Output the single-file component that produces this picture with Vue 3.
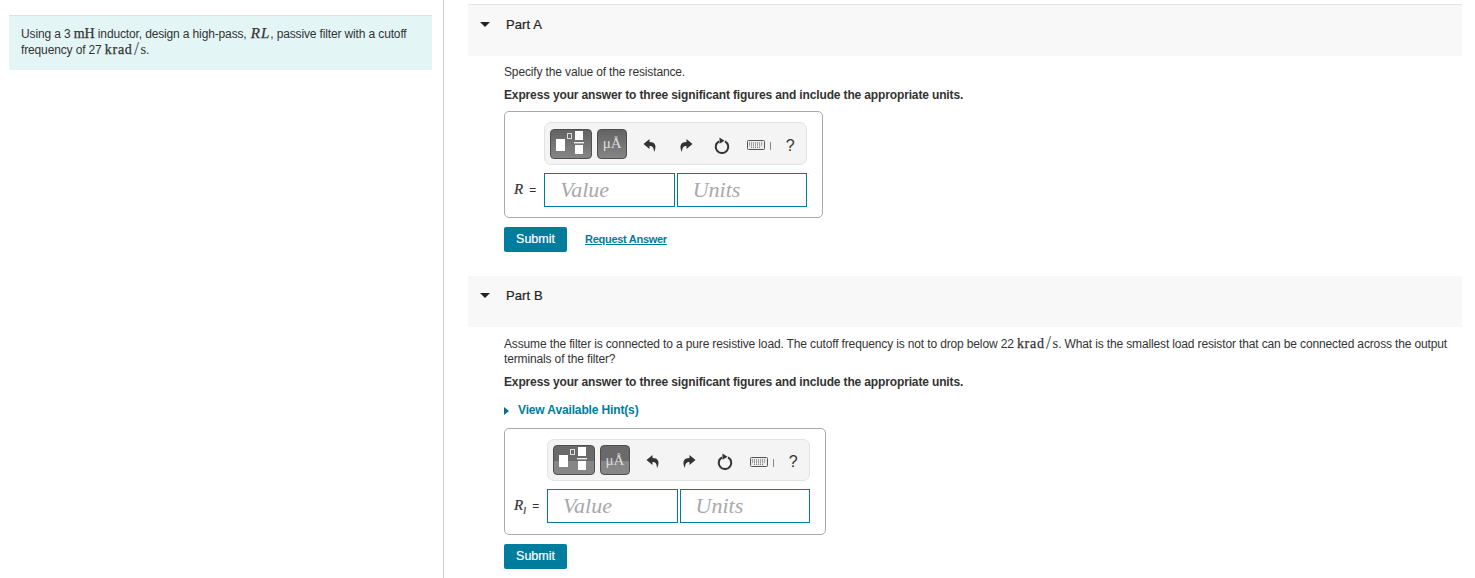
<script setup>
const parts = [
  { name: 'Part A', symbol: 'R', sub: '', canRequest: true },
  { name: 'Part B', symbol: 'R', sub: 'l', canRequest: false },
]
</script>

<template>
  <div class="page">
    <aside class="side">
      <div class="intro">
        Using a 3 <span class="math">mH</span> inductor, design a high-pass, <i class="math">RL</i>, passive filter with a cutoff
        frequency of 27 <span class="math wide-math">krad</span><span class="slash">/</span><span class="math thin">s</span>.
      </div>
    </aside>

    <main class="main">
      <section v-for="part in parts" :key="part.name" class="part">
        <header class="part-head">
          <span class="arrow-down"></span>
          <h2>{{ part.name }}</h2>
        </header>

        <div class="part-body">
          <p v-if="part.canRequest" class="question">Specify the value of the resistance.</p>
          <p v-else class="question">
            Assume the filter is connected to a pure resistive load. The cutoff frequency is not to drop below 22
            <span class="math wide-math">krad</span><span class="slash">/</span><span class="math thin">s</span>. What is the smallest load resistor that can be connected across the output terminals of the filter?
          </p>
          <p class="express">Express your answer to three significant figures and include the appropriate units.</p>
          <div v-if="!part.canRequest" class="hint"><span class="arrow-right"></span>View Available Hint(s)</div>

          <div class="answer">
            <div class="toolbar">
              <button class="tool wide">
                <svg width="42" height="30" viewBox="0 0 42 30">
                  <rect x="6" y="10" width="9" height="12" fill="#fff" />
                  <rect x="17.5" y="4.5" width="4" height="5" fill="none" stroke="#ddd" />
                  <rect x="25" y="2" width="8" height="9" fill="#fff" />
                  <rect x="24" y="13" width="10" height="1.4" fill="#eee" />
                  <rect x="25" y="16" width="8" height="9" fill="#fff" />
                </svg>
              </button>
              <button class="tool unit">μÅ</button>
              <span class="icon">
                <svg width="14" height="15" viewBox="0 0 14 15">
                  <path d="M6.5 1 L0.5 6 L6.5 11 V8 C9.5 8 10.8 9.5 11 14 C13.8 9 13 4 6.5 4 Z" fill="#333" />
                </svg>
              </span>
              <span class="icon">
                <svg width="14" height="15" viewBox="0 0 14 15">
                  <path d="M7.5 1 L13.5 6 L7.5 11 V8 C4.5 8 3.2 9.5 3 14 C0.2 9 1 4 7.5 4 Z" fill="#333" />
                </svg>
              </span>
              <span class="icon narrow">
                <svg width="16" height="17" viewBox="0 0 16 17">
                  <path d="M11 4.4 A6.2 6.2 0 1 1 5 4.4" fill="none" stroke="#333" stroke-width="2" />
                  <path d="M5.5 0.5 L10.5 3.8 L5.5 6.8 Z" fill="#333" />
                </svg>
              </span>
              <span class="icon keys">
                <svg width="18" height="10" viewBox="0 0 18 10">
                  <rect x="0.5" y="0.5" width="17" height="9" rx="1" fill="#ececec" stroke="#555" />
                  <path d="M2 3 H16 M2 5 H16 M4 7.2 H14" stroke="#555" stroke-width="1" stroke-dasharray="1 1" />
                </svg>
              </span>
              <span class="sep"></span>
              <span class="help">?</span>
            </div>

            <label class="symbol"><i>{{ part.symbol }}<sub v-if="part.sub">{{ part.sub }}</sub></i> =</label>
            <div class="inputs">
              <input type="text" placeholder="Value" />
              <input type="text" placeholder="Units" />
            </div>
          </div>

          <div class="actions">
            <button class="submit">Submit</button>
            <a v-if="part.canRequest" class="request" href="#">Request Answer</a>
          </div>
        </div>
      </section>
    </main>
  </div>
</template>

<style>
html,
body {
  margin: 0;
  overflow: hidden;
}
</style>

<style scoped>
.page {
  display: flex;
  height: 578px;
  overflow: hidden;
  font-family: "Liberation Sans", Arial, sans-serif;
  font-size: 12px;
  line-height: 15px;
  letter-spacing: -0.14px;
  color: #333;
  background: #fff;
}

.side {
  flex: none;
  width: 423px;
  padding: 15px 11px 0 9px;
  border-right: 1px solid #c3d0dc;
}

.intro {
  height: 55px;
  box-sizing: border-box;
  padding: 10px 12px;
  background: #e4f5f6;
  border-top: 1px solid #d9e6e8;
}

.math {
  font-family: "Liberation Serif", "DejaVu Serif", serif;
  font-size: 14px;
  letter-spacing: 0;
  -webkit-text-stroke: 0.25px #333;
}

.wide-math {
  letter-spacing: 0.7px;
}

i.math {
  margin-left: 1px;
  font-size: 15px;
  font-style: italic;
  letter-spacing: 1px;
}

.thin {
  font-size: 14.5px;
  -webkit-text-stroke: 0;
}

.slash {
  margin: 0 1.5px;
  font-family: "Liberation Serif", serif;
  font-size: 18px;
  line-height: 0;
  vertical-align: -1px;
  color: #444;
}

.main {
  flex: 1;
  min-width: 0;
  padding: 4px 13px 0 24px;
}

.part {
  margin-bottom: 24px;
}

.part-head {
  display: flex;
  align-items: flex-start;
  height: 39px;
  padding: 12px 0 0 12px;
  background: #f8f8f8;
}

.part:first-child .part-head {
  border-top: 1px solid #e5e5e5;
}

.part-head h2 {
  margin: 0 0 0 16px;
  font-size: 13px;
  line-height: 15px;
  font-weight: normal;
  letter-spacing: 0.1px;
  color: #222;
  -webkit-text-stroke: 0.2px #222;
}

.arrow-down {
  width: 0;
  height: 0;
  margin-top: 5px;
  border-left: 5px solid transparent;
  border-right: 5px solid transparent;
  border-top: 5px solid #222;
}

.part-body {
  padding: 9px 10px 0 36px;
}

.question {
  margin: 0;
}

.express {
  margin: 8px 0 0;
  font-weight: bold;
}

.hint {
  display: flex;
  align-items: center;
  margin-top: 13px;
  font-weight: bold;
  color: #007c9c;
}

.arrow-right {
  width: 0;
  height: 0;
  margin-right: 9px;
  border-top: 4.5px solid transparent;
  border-bottom: 4.5px solid transparent;
  border-left: 5px solid #0a6c8c;
}

.answer {
  display: grid;
  grid-template-columns: auto 263px;
  row-gap: 8px;
  width: max-content;
  margin-top: 8px;
  padding: 10px 15px 10px 0;
  border: 1px solid #aaa;
  border-radius: 5px;
}

.hint + .answer {
  margin-top: 10px;
  padding-bottom: 11px;
}

.toolbar {
  grid-column: 2;
  display: flex;
  align-items: center;
  height: 43px;
  box-sizing: border-box;
  padding: 0 0 0 5px;
  background: #f4f4f4;
  border: 1px solid #e2e2e2;
  border-radius: 7px;
}

.hint + .answer .toolbar {
  height: 42px;
}

.tool {
  flex: none;
  height: 30px;
  padding: 0;
  border: 1px solid #4f4f4f;
  border-radius: 4px;
  background: linear-gradient(#636363, #858585);
  font-family: "Liberation Serif", serif;
  color: #ddd;
  font-size: 15px;
}

.hint + .answer .tool {
  background: linear-gradient(#6a6a6a 0, #6a6a6a 55%, #868686 55%, #868686 100%);
}

.tool.wide {
  width: 42px;
  line-height: 0;
}

.tool.wide svg {
  margin: -1px;
}

.tool.unit {
  width: 30px;
  margin-left: 5px;
  margin-right: 5px;
}

.icon {
  display: flex;
  flex: none;
  align-items: center;
  justify-content: center;
  width: 36px;
  height: 30px;
  margin-top: 3px;
}

.icon.narrow {
  width: 35px;
}

.icon.keys {
  width: 34px;
}

.sep {
  flex: none;
  width: 1px;
  height: 8px;
  margin: 5px 3px 0 -3px;
  background: #888;
}

.help {
  flex: none;
  width: 30px;
  margin: 3px 0 0 1px;
  text-align: center;
  font-size: 16px;
  color: #333;
}

.symbol {
  grid-column: 1;
  grid-row: 2;
  align-self: center;
  padding: 0 8px 0 9px;
}

.symbol i {
  margin-right: 3px;
  font-family: "Liberation Serif", serif;
  font-size: 15px;
  letter-spacing: 0;
  -webkit-text-stroke: 0.2px #333;
}

.symbol sub {
  font-size: 10px;
  line-height: 0;
}

.inputs {
  display: flex;
  gap: 2px;
  grid-column: 2;
  grid-row: 2;
}

.inputs input {
  width: 0;
  flex: 1;
  height: 34px;
  box-sizing: border-box;
  padding: 0 0 0 15px;
  border: 1px solid #007c9c;
  border-radius: 0;
  outline: none;
  font-family: "Liberation Serif", serif;
  font-style: italic;
  font-size: 22px;
  background: #fff;
}

.inputs input::placeholder {
  color: #a8a8a8;
  opacity: 1;
}

.actions {
  display: flex;
  align-items: center;
  margin-top: 9px;
}

.submit {
  width: 63px;
  height: 25px;
  padding: 0 0 2px;
  border: 0;
  border-radius: 2px;
  background: #007c9c;
  color: #fff;
  font-family: "Liberation Sans", Arial, sans-serif;
  font-size: 12.5px;
  -webkit-text-stroke: 0.2px #fff;
}

.request {
  margin-left: 18px;
  font-size: 11px;
  font-weight: bold;
  letter-spacing: -0.28px;
  color: #007c9c;
}
</style>
